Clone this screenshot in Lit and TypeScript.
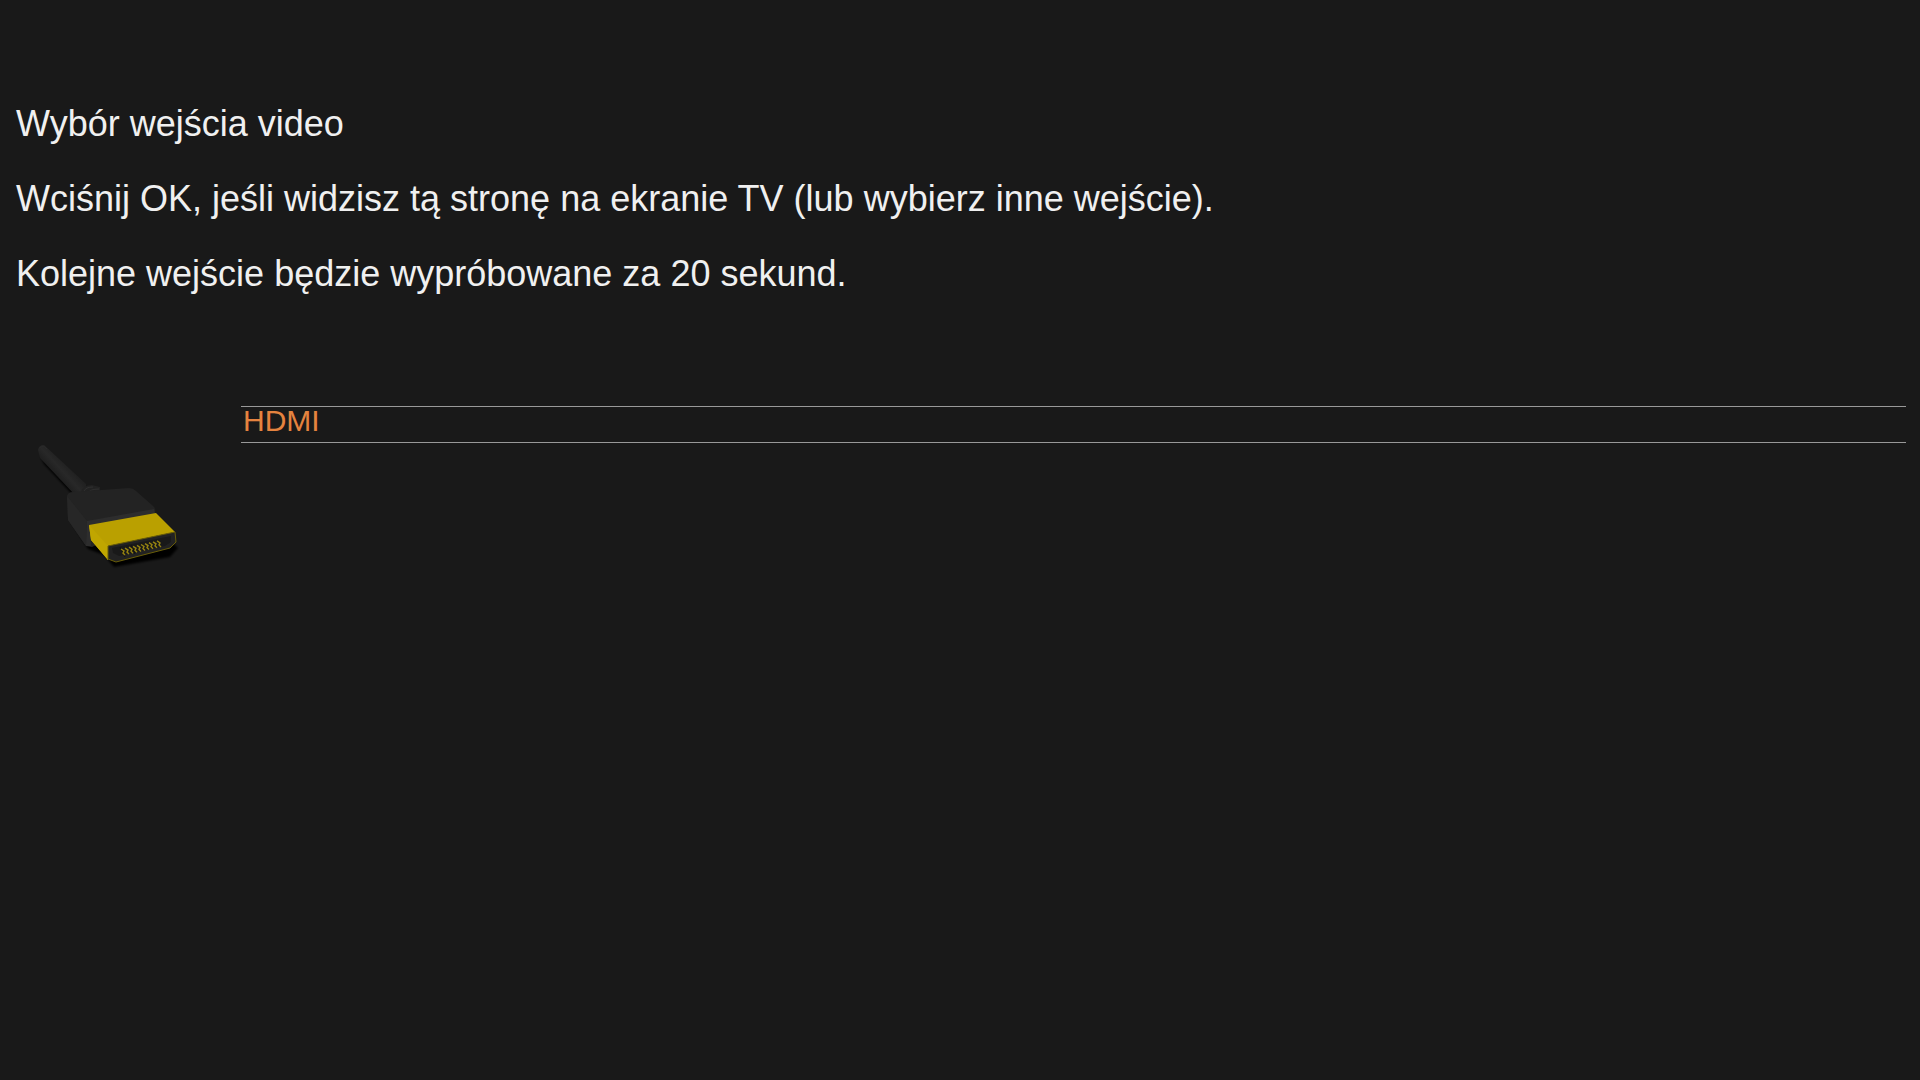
import { LitElement, html, css, svg } from "lit";
import { customElement, state } from "lit/decorators.js";

@customElement("hdmi-plug")
class HdmiPlug extends LitElement {
  static styles = css`
    :host {
      display: block;
    }
    .art {
      display: block;
      width: 100%;
      height: auto;
    }
  `;

  render() {
    const pins = Array.from({ length: 10 }, (_, i) => i);
    return html`
      <svg class="art" viewBox="0 0 170 150" role="img" aria-label="HDMI">
        <defs>
          <filter id="soft" x="-20%" y="-20%" width="140%" height="140%">
            <feGaussianBlur stdDeviation="1" />
          </filter>
          <linearGradient id="cord" gradientUnits="userSpaceOnUse" x1="36" y1="46" x2="48" y2="35">
            <stop offset="0" stop-color="#1e1e1e" />
            <stop offset="0.5" stop-color="#282828" />
            <stop offset="1" stop-color="#202020" />
          </linearGradient>
        </defs>
        <path d="M20 26 L57 62 L52 64 L24 34 Z M50 90 L68 119 L84 125 L94 137 L150 127 L158 118 L152 112 L90 120 L60 100 Z" fill="#050505" filter="url(#soft)" />
        <path d="M18 20 Q19 15 24 15 L66 54 L66 62 L54 64 L20 28 Z" fill="url(#cord)" />
        <path d="M20 18 Q23 14 27 19" fill="none" stroke="#2a2a2a" />
        <path d="M61 62 Q63 55 72 55 L80 57 L80 63 Z" fill="#222222" />
        <path d="M64 61 Q66 57 73 57 M68 63 Q70 59 79 59" fill="none" stroke="#303030" />
        <path d="M47 66 Q48 62 53 62 L109 58 Q113 58 116 61 L133 76 Q136 78 135 82 L135 88 L72 117 L66 116 L48 90 Z" fill="#232323" />
        <path d="M47 66 L67 91 L66 116 L48 90 Z" fill="#272727" />
        <path d="M67 91 L134 79 L135 84 L70 96 L71 116 L66 116 Z" fill="#2d2d2d" />
        <path d="M69 95 L136 83 L155 102 L88 116 L88 130 L71 110 Z" fill="#baa000" />
        <path d="M69 95 L88 116 L88 130 L71 110 Z" fill="#c0a600" />
        <path d="M88 116 L155 102 L156 112 L150 118 L96 132 L88 129 Z" fill="#222222" stroke="#695d08" />
        <path d="M92 118 L151 106 L151 112 L145 116 L99 126 L93 123 Z" fill="#191919" />
        <path d="M100 117 L105 127 M111 115 L115 124" stroke="#101010" />
        ${pins.map(
          (i) => svg`<path d=${`M${101 + i * 4} ${119 - i * 0.9} l3 2 l-1 2 l2 2`} fill="none" stroke="#978411" stroke-width="1.4" />`
        )}
      </svg>
    `;
  }
}

@customElement("app-root")
class AppRoot extends LitElement {
  static styles = css`
    :host {
      display: block;
      box-sizing: border-box;
      min-height: 100vh;
      padding: 86px 14px 48px 16px;
      background: #191919;
      color: #f0f0f0;
      font-family: "Liberation Sans", Arial, sans-serif;
    }
    .title,
    .line {
      margin: 0;
      font-size: 36px;
      font-weight: 400;
      line-height: 75px;
    }
    .chooser {
      display: flex;
      align-items: flex-start;
      gap: 51px;
      padding-top: 95px;
    }
    .plug {
      flex: none;
      width: 170px;
      margin: 24px 0 0 4px;
    }
    .inputs {
      flex: 1;
      margin: 0;
      padding: 0;
      list-style: none;
    }
    .input {
      display: block;
      box-sizing: border-box;
      width: 100%;
      height: 37px;
      margin: 0;
      padding: 0 2px 8px;
      border: 0;
      border-block: 1px solid transparent;
      background: none;
      color: #c8c8c8;
      font: inherit;
      font-size: 30px;
      line-height: 28px;
      text-align: left;
    }
    .input.current {
      border-color: #999999;
      color: #e5833f;
    }
  `;

  @state() private inputs = ["HDMI"];
  @state() private current = 0;
  @state() private seconds = 20;

  render() {
    return html`
      <main>
        <h1 class="title">Wybór wejścia video</h1>
        <p class="line">Wciśnij OK, jeśli widzisz tą stronę na ekranie TV (lub wybierz inne wejście).</p>
        <p class="line">Kolejne wejście będzie wypróbowane za ${this.seconds} sekund.</p>
        <section class="chooser">
          <hdmi-plug class="plug"></hdmi-plug>
          <ul class="inputs">
            ${this.inputs.map(
              (name, i) => html`<li>
                <button
                  class="input ${i === this.current ? "current" : ""}"
                  @click=${() => (this.current = i)}
                >${name}</button>
              </li>`
            )}
          </ul>
        </section>
      </main>
    `;
  }
}
